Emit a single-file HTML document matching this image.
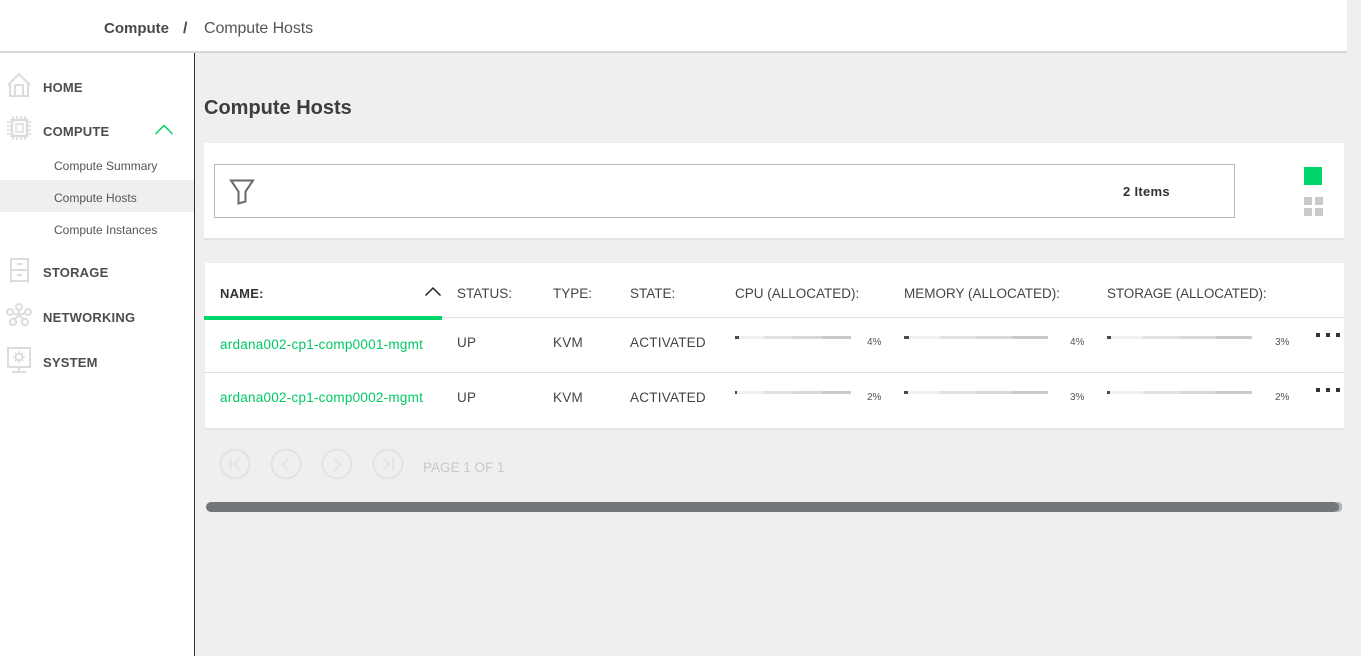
<!DOCTYPE html>
<html><head><meta charset="utf-8"><style>
html,body{margin:0;padding:0;width:1361px;height:656px;overflow:hidden;background:#efefef;font-family:"Liberation Sans",sans-serif;color:#444}
div,span.t{position:absolute}
.t{white-space:nowrap;position:absolute}
.nav{font-weight:bold;font-size:13px;color:#4d4d4d;left:43px;letter-spacing:.2px;line-height:16px}
.sub{font-size:12px;color:#555;left:54px;line-height:14px}
.th{font-size:13.5px;color:#444;top:286px;line-height:16px}
.td{font-size:13.5px;color:#444;line-height:16px;letter-spacing:.24px}
.pct{font-size:10px;color:#555;line-height:14px}
.bar{height:3px;background:linear-gradient(90deg,#f0f0f0 0 25%,#e2e2e2 25% 50%,#d8d8d8 50% 75%,#cacaca 75% 100%)}
.fill{position:absolute;left:0;top:0;height:3px;background:#4a4a4a}
.dot{width:4px;height:4px;background:#333}
svg{position:absolute;overflow:visible}
</style></head><body>
<!-- top bar -->
<div style="left:0;top:0;width:1347px;height:51px;background:#fff;border-bottom:2px solid #d6d6d6"></div>
<span class="t" style="left:104px;top:20px;font-size:15px;font-weight:bold;color:#4a4a4a;line-height:18px">Compute</span>
<span class="t" style="left:183px;top:20px;font-size:16px;font-weight:bold;color:#4a4a4a;line-height:18px">/</span>
<span class="t" style="left:204px;top:20px;font-size:16px;color:#555;line-height:18px;letter-spacing:-.1px">Compute Hosts</span>
<!-- sidebar -->
<div style="left:0;top:53px;width:194px;height:603px;background:#fff;border-right:1px solid #333"></div>
<div style="left:0;top:180px;width:194px;height:32px;background:#efefef"></div>
<svg style="left:0;top:0" width="194" height="400" fill="none" stroke="#dcdcdc" stroke-width="2">
<path d="M8 85L19 74L30 85M10 83V96H28V83M15 96V85H23V96"/>
<rect x="12" y="120" width="15" height="16" stroke-width="2.500"/><rect x="16" y="124" width="7" height="8" stroke-width="1.500"/>
<path d="M7 122h4M7 126h4M7 130h4M7 134h4M27 122h4M27 126h4M27 130h4M27 134h4M13 116v4M17 116v4M21 116v4M25 116v4M13 136v4M17 136v4M21 136v4M25 136v4" stroke-width="1.500"/>
<path d="M11 259H28V281H11ZM11 270H28M17 264h5M17 275h5M11 281v2M28 281v2"/>
<path d="M19 309V315M12 313L19 315L26 313M19 315L14 320M19 315L24 320" stroke-width="2"/>
<circle cx="19" cy="307" r="3"/><circle cx="10" cy="312" r="3"/><circle cx="28" cy="312" r="3"/><circle cx="13" cy="322" r="3.200"/><circle cx="25" cy="322" r="3.200"/>
<path d="M8 348H30V367H8ZM19 367V372M12 372H26"/>
<circle cx="19" cy="357" r="3.500"/><path d="M19 351v2M19 361v2M13 357h2M23 357h2M15 353l1.500 1.500M23 353l-1.500 1.500M15 361l1.500-1.500M23 361l-1.500-1.500" stroke-width="1.500"/>
<path d="M155.500 134L164 125.500L172.500 134" stroke="#01d56a" stroke-width="1.500"/>
</svg>
<span class="t nav" style="top:80px">HOME</span>
<span class="t nav" style="top:124px">COMPUTE</span>
<span class="t sub" style="top:159px">Compute Summary</span>
<span class="t sub" style="top:191px">Compute Hosts</span>
<span class="t sub" style="top:223px">Compute Instances</span>
<span class="t nav" style="top:265px">STORAGE</span>
<span class="t nav" style="top:310px">NETWORKING</span>
<span class="t nav" style="top:355px">SYSTEM</span>
<!-- title -->
<span class="t" style="left:204px;top:95px;font-size:20px;font-weight:bold;color:#3d3d3d;line-height:26px">Compute Hosts</span>
<!-- filter card -->
<div style="left:204px;top:143px;width:1140px;height:95px;background:#fff;border-bottom:2px solid #e4e4e4"></div>
<div style="left:214px;top:164px;width:1019px;height:52px;border:1px solid #b8b8b8;background:#fff"></div>
<svg style="left:0;top:0" width="1361" height="300" fill="none">
<path d="M231 180.500H253L245.500 191.500V201.500L238.500 203.500V191.500Z" stroke="#6a6a6a" stroke-width="2"/>
</svg>
<span class="t" style="left:1123px;top:184px;font-size:13px;font-weight:bold;color:#333;line-height:15px;letter-spacing:.3px">2 Items</span>
<div style="left:1304px;top:167px;width:18px;height:18px;background:#01d56a"></div>
<div style="left:1304px;top:197px;width:8px;height:8px;background:#c8cacb"></div>
<div style="left:1315px;top:197px;width:8px;height:8px;background:#c8cacb"></div>
<div style="left:1304px;top:208px;width:8px;height:8px;background:#c8cacb"></div>
<div style="left:1315px;top:208px;width:8px;height:8px;background:#c8cacb"></div>
<!-- table -->
<div style="left:205px;top:263px;width:1139px;height:165px;background:#fff;border-bottom:2px solid #e4e4e4"></div>
<div style="left:442px;top:317px;width:902px;height:1px;background:#e2e2e2"></div>
<div style="left:204px;top:316px;width:238px;height:4px;background:#01d56a"></div>
<div style="left:205px;top:372px;width:1139px;height:1px;background:#e2e2e2"></div>
<span class="t th" style="left:220px;font-weight:bold;color:#333;font-size:13px;letter-spacing:.2px">NAME:</span>
<svg style="left:0;top:0" width="500" height="300" fill="none"><path d="M425.500 295.500L433 288L440.500 295.500" stroke="#222" stroke-width="1.500"/></svg>
<span class="t th" style="left:457px">STATUS:</span>
<span class="t th" style="left:553px">TYPE:</span>
<span class="t th" style="left:630px">STATE:</span>
<span class="t th" style="left:735px">CPU (ALLOCATED):</span>
<span class="t th" style="left:904px">MEMORY (ALLOCATED):</span>
<span class="t th" style="left:1107px;letter-spacing:-.1px">STORAGE (ALLOCATED):</span>
<!-- row 1 -->
<span class="t td" style="left:220px;top:337px;color:#01c964">ardana002-cp1-comp0001-mgmt</span>
<span class="t td" style="left:457px;top:335px">UP</span>
<span class="t td" style="left:553px;top:335px">KVM</span>
<span class="t td" style="left:630px;top:335px">ACTIVATED</span>
<div class="bar" style="left:735px;top:336px;width:116px"><div class="fill" style="width:4px"></div></div>
<span class="t pct" style="left:867px;top:336px">4%</span>
<div class="bar" style="left:904px;top:336px;width:144px"><div class="fill" style="width:5px"></div></div>
<span class="t pct" style="left:1070px;top:336px">4%</span>
<div class="bar" style="left:1107px;top:336px;width:145px"><div class="fill" style="width:4px"></div></div>
<span class="t pct" style="left:1275px;top:336px">3%</span>
<div class="dot" style="left:1316px;top:333px"></div><div class="dot" style="left:1326px;top:333px"></div><div class="dot" style="left:1336px;top:333px"></div>
<!-- row 2 -->
<span class="t td" style="left:220px;top:390px;color:#01c964">ardana002-cp1-comp0002-mgmt</span>
<span class="t td" style="left:457px;top:390px">UP</span>
<span class="t td" style="left:553px;top:390px">KVM</span>
<span class="t td" style="left:630px;top:390px">ACTIVATED</span>
<div class="bar" style="left:735px;top:391px;width:116px"><div class="fill" style="width:2px"></div></div>
<span class="t pct" style="left:867px;top:391px">2%</span>
<div class="bar" style="left:904px;top:391px;width:144px"><div class="fill" style="width:4px"></div></div>
<span class="t pct" style="left:1070px;top:391px">3%</span>
<div class="bar" style="left:1107px;top:391px;width:145px"><div class="fill" style="width:3px"></div></div>
<span class="t pct" style="left:1275px;top:391px">2%</span>
<div class="dot" style="left:1316px;top:388px"></div><div class="dot" style="left:1326px;top:388px"></div><div class="dot" style="left:1336px;top:388px"></div>
<!-- pager -->
<svg style="left:0;top:0" width="600" height="520" fill="none" stroke="#e2e2e2" stroke-width="2">
<circle cx="235" cy="464" r="14.500"/><circle cx="286" cy="464" r="14.500"/><circle cx="337" cy="464" r="14.500"/><circle cx="388" cy="464" r="14.500"/>
<path d="M231 458V470M240 458L234 464L240 470" stroke-width="1.500"/>
<path d="M289 458L282.500 464.500L289 471" stroke-width="1.500"/>
<path d="M334 458L340.500 464.500L334 471" stroke-width="1.500"/>
<path d="M383 458L389.500 464L383 470M393 458V470" stroke-width="1.500"/>
</svg>
<span class="t" style="left:423px;top:460px;font-size:13.500px;color:#c8c8c8;line-height:16px">PAGE 1 OF 1</span>
<!-- scrollbar -->
<div style="left:1334px;top:502px;width:8px;height:10px;border-radius:5px;background:#b0b2b4"></div>
<div style="left:206px;top:502px;width:1133px;height:10px;border-radius:5px;background:#73767a"></div>
</body></html>
